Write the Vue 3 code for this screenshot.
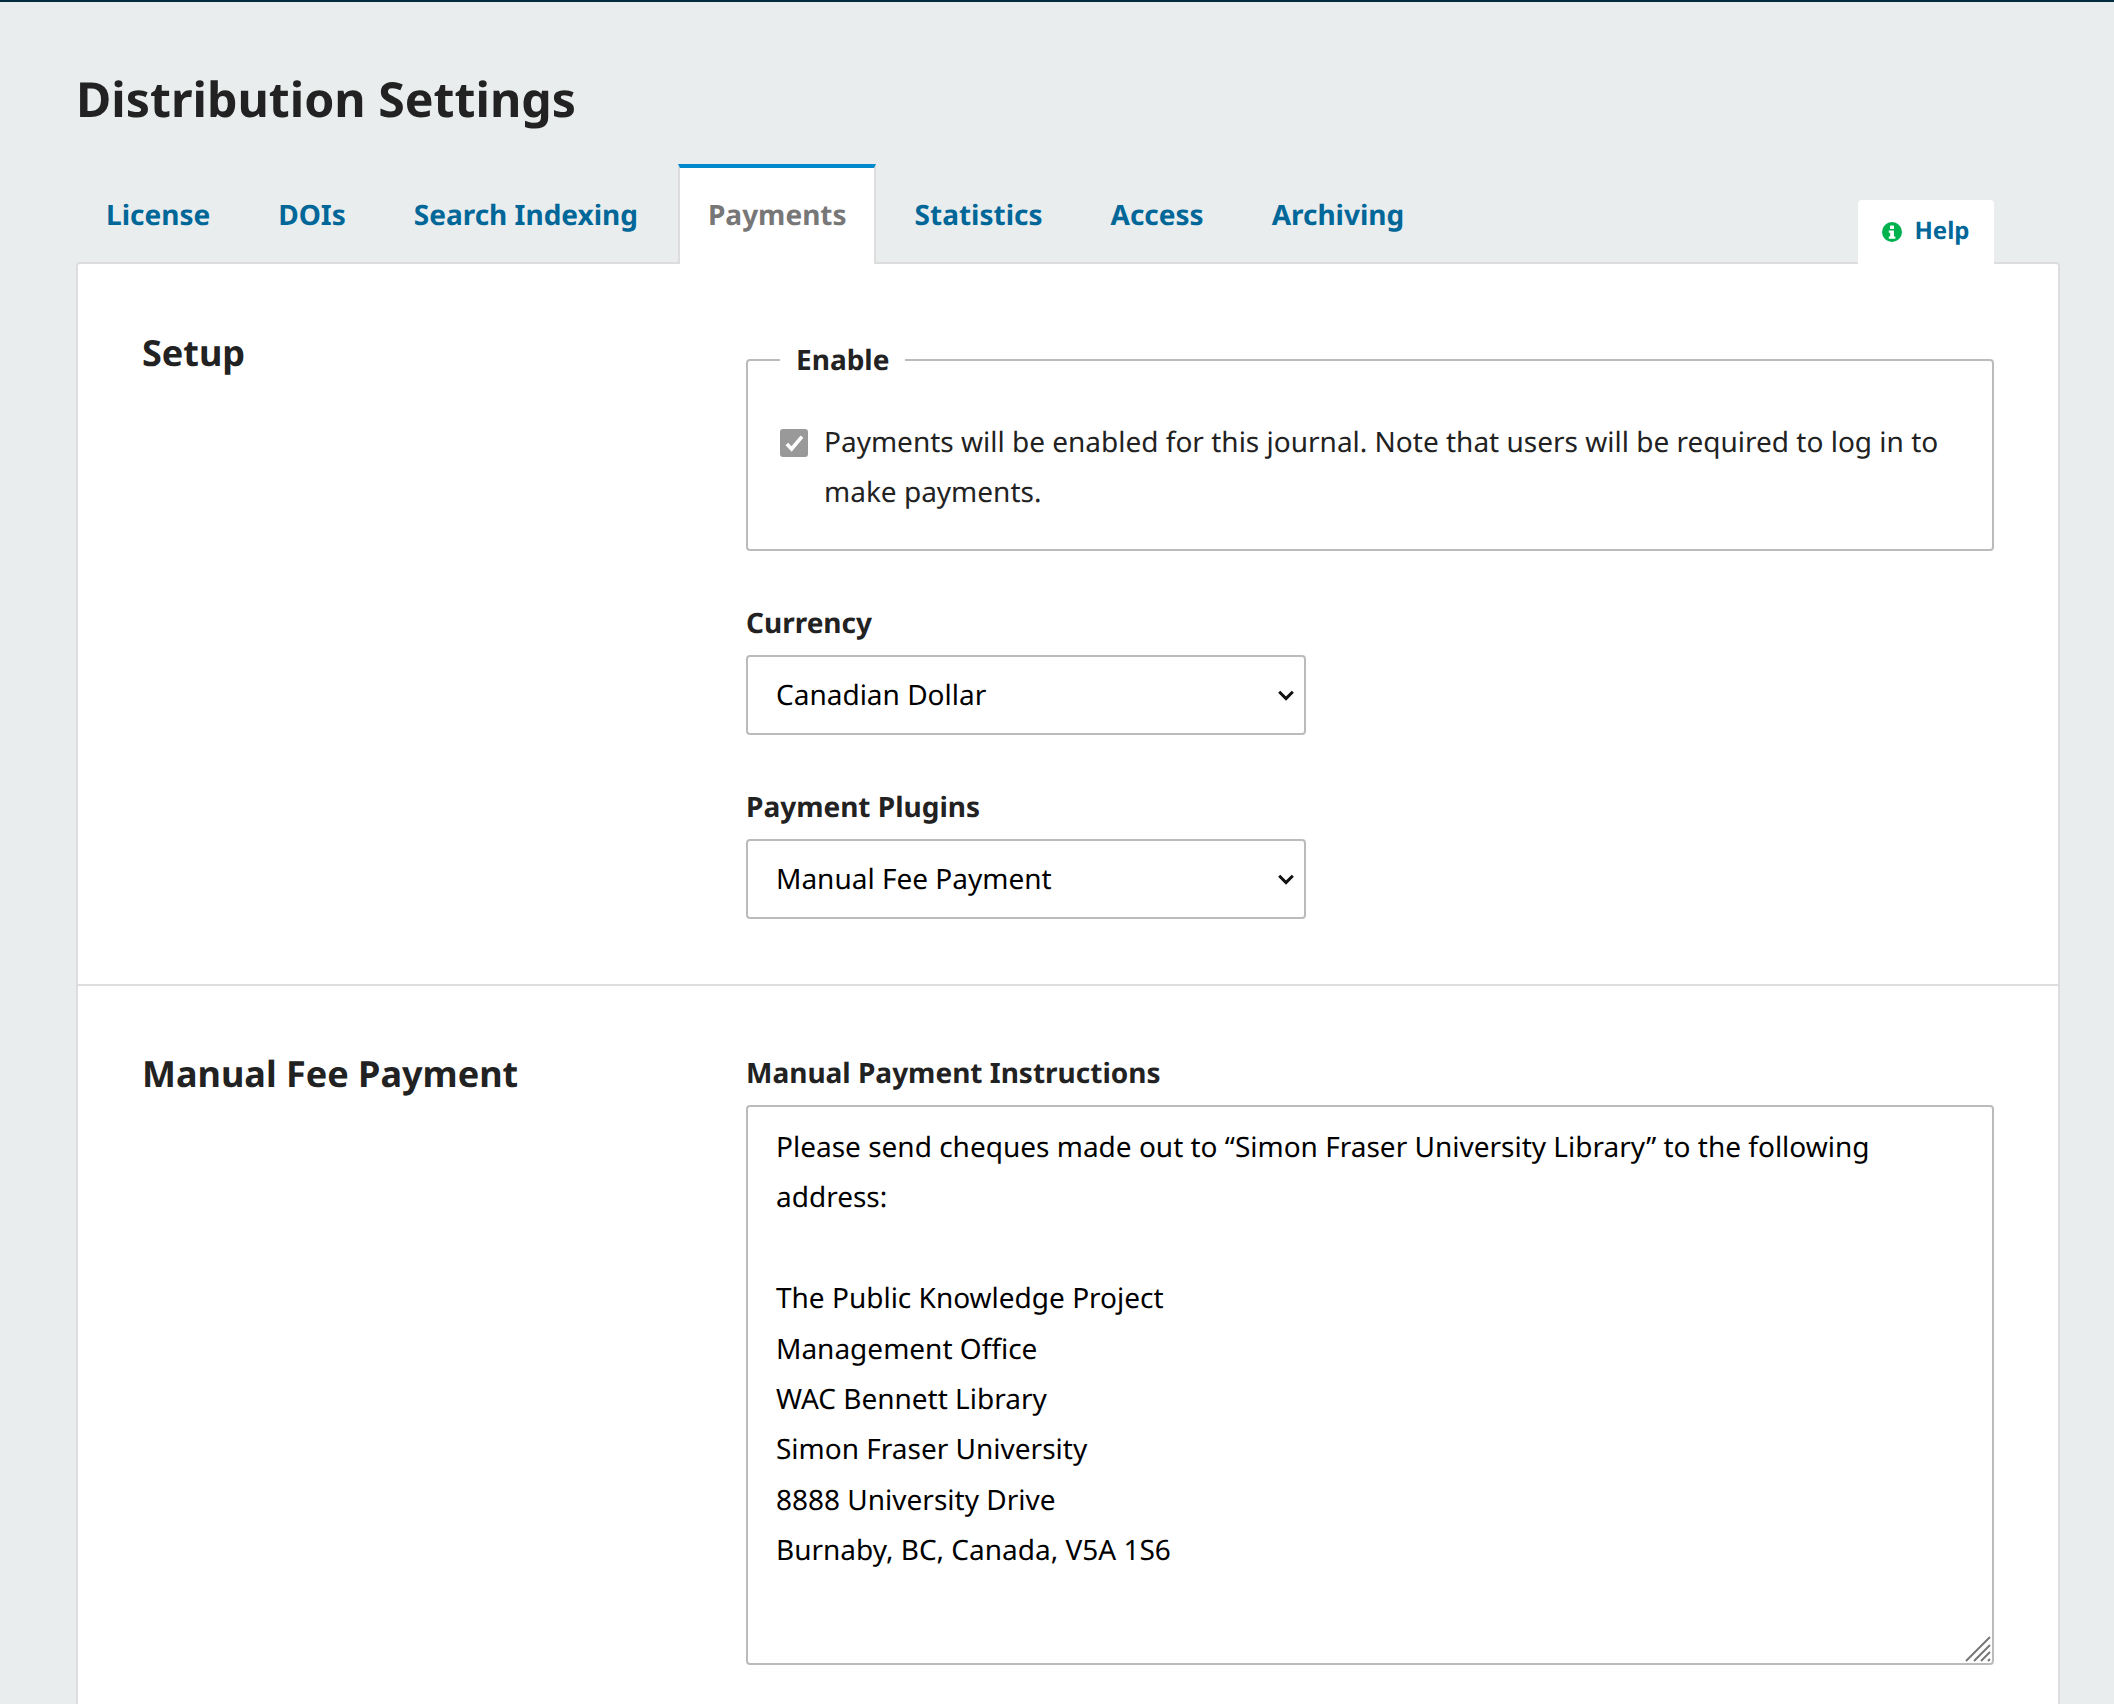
<template>
  <div class="page">
    <h1 class="page-title">Distribution Settings</h1>

    <div class="tabs">
      <a
        v-for="tab in tabs"
        :key="tab"
        class="tab"
        :class="{ 'tab--active': tab === 'Payments' }"
      >{{ tab }}</a>
      <a class="help">
        <svg class="help-icon" viewBox="0 0 20 20">
          <circle cx="10" cy="10" r="10" fill="#00b24e" />
          <rect x="8" y="3.6" width="4" height="3.4" rx="0.6" fill="#fff" />
          <path d="M6.8 8.4h5.2v6h1.4v2.4H6.8v-2.4h1.4v-3.6H6.8z" fill="#fff" />
        </svg>
        Help
      </a>
    </div>

    <div class="panel">
      <section class="section section--setup">
        <h2 class="section-title">Setup</h2>
        <div class="fields">
          <fieldset class="enable">
            <legend class="enable-legend">Enable</legend>
            <div class="check-row">
              <span class="check">
                <svg viewBox="0 0 28 28" width="28" height="28">
                  <path d="M6.8 15l4.8 5L22 7.6" fill="none" stroke="#fff" stroke-width="3.6" />
                </svg>
              </span>
              <span>Payments will be enabled for this journal. Note that users will be required to log in to make payments.</span>
            </div>
          </fieldset>

          <div v-for="field in selects" :key="field.label" class="field">
            <div class="label">{{ field.label }}</div>
            <div class="select">
              {{ field.value }}
              <svg class="chevron" viewBox="0 0 16 11" width="16" height="11">
                <path d="M1.2 1.8L8 8.6l6.8-6.8" fill="none" stroke="#111" stroke-width="3" />
              </svg>
            </div>
          </div>
        </div>
      </section>

      <section class="section section--manual">
        <h2 class="section-title">Manual Fee Payment</h2>
        <div class="fields">
          <div class="label">Manual Payment Instructions</div>
          <div class="textarea">
            <div v-for="(line, i) in instructions" :key="i">{{ line }}</div>
            <svg class="resizer" viewBox="0 0 26 26" width="26" height="26">
              <path d="M1 25L25 1M9 25L25 9M16 25l9-9M23 25l2-2" stroke="#777" stroke-width="2" fill="none" />
            </svg>
          </div>
        </div>
      </section>
    </div>
  </div>
</template>

<script setup>
const tabs = ['License', 'DOIs', 'Search Indexing', 'Payments', 'Statistics', 'Access', 'Archiving']

const selects = [
  { label: 'Currency', value: 'Canadian Dollar' },
  { label: 'Payment Plugins', value: 'Manual Fee Payment' },
]

const instructions = [
  'Please send cheques made out to “Simon Fraser University Library” to the following',
  'address:',
  '\u00a0',
  'The Public Knowledge Project',
  'Management Office',
  'WAC Bennett Library',
  'Simon Fraser University',
  '8888 University Drive',
  'Burnaby, BC, Canada, V5A 1S6',
]
</script>

<style>
html, body {
  margin: 0;
  background: #eaedee;
  overflow: hidden;
}
</style>

<style scoped>
.page {
  height: 1702px;
  overflow: hidden;
  border-top: 2px solid #002c40;
  background: #eaedee;
  font-family: "Noto Sans", sans-serif;
  font-size: 28px;
  line-height: 50.4px;
  text-rendering: geometricPrecision;
  color: rgba(0, 0, 0, 0.87);
  padding: 0 54px 0 76px;
}
.page-title {
  margin: 0;
  padding-top: 67px;
  height: 95px;
  font-size: 48.25px;
  line-height: 60px;
  font-weight: 700;
  color: #222;
}
.tabs {
  display: flex;
  height: 98px;
  align-items: stretch;
  position: relative;
  z-index: 1;
}
.tab {
  padding: 22px 28px 0;
  margin-right: 8px;
  font-weight: 700;
  color: #006798;
  border: 2px solid transparent;
  border-top-width: 4px;
  border-bottom: 0;
}
.tab--active {
  background: #fff;
  color: #777;
  border-color: #ddd;
  border-top-color: #008acb;
  margin-left: 2px;
  margin-right: 9px;
  margin-bottom: -2px;
  padding-right: 27px;
}
.help {
  margin-left: auto;
  margin-right: 66px;
  align-self: flex-end;
  box-sizing: border-box;
  width: 136px;
  height: 64px;
  margin-bottom: -2px;
  padding-bottom: 1px;
  display: flex;
  align-items: center;
  justify-content: center;
  gap: 12px;
  background: #fff;
  border-radius: 4px 4px 0 0;
  font-size: 24px;
  font-weight: 700;
  color: #006798;
}
.help-icon {
  width: 20px;
  height: 20px;
}
.panel {
  background: #fff;
  border: 2px solid #ddd;
  border-radius: 4px 4px 0 0;
}
.section {
  display: grid;
  grid-template-columns: 604px 1248px;
  padding: 0 0 0 64px;
}
.section--setup {
  height: 720px;
  border-bottom: 2px solid #ddd;
}
.section--manual {
  height: 800px;
}
.section-title {
  margin: 0;
  padding-top: 59px;
  font-size: 36px;
  line-height: 60px;
  font-weight: 700;
  color: #222;
}
.section--manual .section-title {
  padding-top: 58px;
}
.fields {
  padding-top: 95px;
}
.section--manual .fields {
  padding-top: 65px;
}
.enable {
  box-sizing: border-box;
  margin: 0 0 50px;
  height: 192px;
  padding: 0 32px;
  border: 2px solid #bbb;
  border-radius: 4px;
  min-width: 0;
}
.enable-legend {
  padding: 0 16px;
  font-weight: 700;
  line-height: 0;
  color: #222;
}
.check-row {
  display: flex;
  gap: 16px;
  padding-top: 56px;
  color: #222;
}
.check {
  flex: none;
  width: 28px;
  height: 28px;
  margin-top: 12px;
  background: #999;
  border-radius: 3px;
}
.check svg {
  display: block;
}
.field {
  margin-bottom: 50px;
}
.label {
  font-weight: 700;
  line-height: 44px;
  color: #222;
  margin-bottom: 10px;
}
.select {
  position: relative;
  box-sizing: border-box;
  width: 560px;
  height: 80px;
  padding: 0 28px;
  display: flex;
  align-items: center;
  border: 2px solid #bbb;
  border-radius: 4px;
  color: #000;
}
.chevron {
  position: absolute;
  right: 10px;
  top: 33px;
}
.textarea {
  position: relative;
  box-sizing: border-box;
  height: 560px;
  padding: 15px 28px;
  border: 2px solid #bbb;
  border-radius: 4px;
  color: #000;
}
.resizer {
  position: absolute;
  right: 1px;
  bottom: 1px;
}
</style>
